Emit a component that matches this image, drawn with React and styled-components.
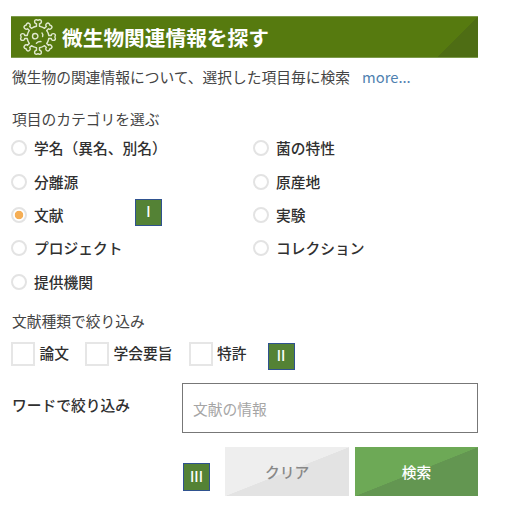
import { useState } from "react"
import styled, { createGlobalStyle } from "styled-components"

const GlobalStyle = createGlobalStyle`
  * {
    box-sizing: border-box;
  }

  body {
    margin: 0;
    background-color: #fff;
    color: #303030;
    font-family: "Noto Sans CJK JP", "Noto Sans", sans-serif;
    font-size: 14.75px;
    line-height: 22px;
  }

  button,
  input {
    font: inherit;
  }
`

const Panel = styled.main`
  width: 509px;
  height: 513px;
  padding: 16px 31px 0 11px;
  overflow: hidden;
`

const Header = styled.header`
  display: flex;
  align-items: center;
  gap: 6px;
  height: 42px;
  padding-left: 8px;
  border: 1px solid #7d9a4b;
  border-width: 1px 0;
  background: linear-gradient(135deg, transparent 50%, #4e6d14 50.5%) right /
    41px 100% no-repeat #567a0f;
`

const Title = styled.h1`
  margin: 0 0 0 -1px;
  color: #fff;
  font-size: 20.7px;
  font-weight: 700;
  line-height: 30px;
`

const Lead = styled.p`
  margin: 8px 0 0 1px;
  color: #444;
  white-space: nowrap;
`

const MoreLink = styled.a`
  margin-left: 12px;
  color: #4f81b0;
  text-decoration: none;
`

const Heading = styled.h2`
  margin: ${(props) => props.$top}px 0 0 1px;
  color: #444;
  font-size: inherit;
  font-weight: 400;
`

const RadioGrid = styled.div`
  display: grid;
  grid-template-columns: 242px 1fr;
  grid-auto-rows: 33.4px;
  align-items: center;
  margin-top: 2.5px;
`

const Cell = styled.div`
  position: relative;
`

const RadioLabel = styled.label`
  display: inline-flex;
  align-items: center;
  gap: 7px;
  font-weight: 500;
  white-space: nowrap;
`

const Radio = styled.input`
  appearance: none;
  flex: none;
  width: 16px;
  height: 16px;
  margin: 0;
  border: 2px solid #e3e3e3;
  border-radius: 50%;
  background-color: #fff;

  &:checked {
    background-image: radial-gradient(circle, #f5ae55 3.9px, transparent 4.6px);
  }
`

const CheckRow = styled.div`
  display: flex;
  align-items: center;
  height: 24px;
  margin-top: 9.5px;
`

const CheckLabel = styled.label`
  display: flex;
  align-items: center;
  gap: 4.5px;
  margin-right: 16px;
  font-weight: 500;
`

const CheckText = styled.span`
  margin-top: -2px;
`

const Checkbox = styled.input`
  appearance: none;
  flex: none;
  width: 24px;
  height: 24px;
  margin: 0;
  border: 2px solid #e6e6e6;
  background-color: #fff;

  &:checked {
    background-color: #f5ae55;
  }
`

const Badge = styled.span`
  display: flex;
  align-items: center;
  justify-content: center;
  flex: none;
  width: 27px;
  height: 27px;
  padding-bottom: 3px;
  border: 1px solid #2f528f;
  background-color: #548235;
  color: #fff;
  font-size: 14px;
  font-weight: 500;
  line-height: 1;
`

const FloatingBadge = styled(Badge)`
  position: absolute;
  top: -5px;
  left: 124px;
`

const CheckBadge = styled(Badge)`
  margin: 6px 0 0 5px;
`

const WordRow = styled.div`
  display: grid;
  grid-template-columns: 171px 1fr;
  margin-top: 17px;
`

const WordLabel = styled.label`
  padding: 11px 0 0 1px;
  font-weight: 500;
`

const WordInput = styled.input`
  width: 296px;
  height: 50px;
  padding: 2px 10px 0;
  border: 1px solid #777;
  border-radius: 0;
  outline: none;
  color: #222;

  &::placeholder {
    color: #a5a5a5;
    opacity: 1;
  }
`

const Actions = styled.div`
  display: flex;
  justify-content: flex-end;
  align-items: flex-start;
  margin-top: 14px;
`

const ActionBadge = styled(Badge)`
  height: 28px;
  margin: 16px 15px 0 0;
  padding-bottom: 1px;
`

const Button = styled.button`
  width: ${(props) => (props.$primary ? 123 : 124)}px;
  height: 49px;
  margin-left: ${(props) => (props.$primary ? 6 : 0)}px;
  padding: 1px 0 0;
  border: none;
  background: ${(props) =>
    props.$primary
      ? "linear-gradient(to bottom right, #6da956 50%, #639651 50.5%)"
      : "linear-gradient(to bottom right, #eeeeee 50%, #e3e3e3 50.5%)"};
  color: ${(props) => (props.$primary ? "#fff" : "#888")};
  font-weight: 500;
`

const categories = [
  "学名（異名、別名）",
  "菌の特性",
  "分離源",
  "原産地",
  "文献",
  "実験",
  "プロジェクト",
  "コレクション",
  "提供機関",
]

const documentTypes = ["論文", "学会要旨", "特許"]

const spikes = [0, 45, 90, 135, 180, 225, 270, 315]

function VirusIcon() {
  return (
    <svg
      width="38"
      height="38"
      viewBox="-19 -19 38 38"
      fill="none"
      stroke="#dfe8cd"
      strokeWidth="1.4"
      strokeLinecap="round"
      strokeLinejoin="round"
    >
      {spikes.map((angle) => (
        <path
          key={angle}
          transform={`rotate(${angle})`}
          d="M-6.3 -8.8Q-4.2 -10.3 -1.5 -10.8L-1.5 -13.3C-4.1 -13.3 -4 -17.4 -1.5 -17.4Q0 -16.2 1.5 -17.4C4 -17.4 4.1 -13.3 1.5 -13.3L1.5 -10.8"
        />
      ))}
      <circle cx="-2.8" cy="-.8" r="2.7" />
      <path d="M4 -4Q5.4 -2.6 4.6 -.5M-1.6 6.2Q.4 4.3 3 4.6" />
    </svg>
  )
}

export default function App() {
  const [category, setCategory] = useState("文献")
  const [word, setWord] = useState("")

  function handleClear() {
    setCategory("文献")
    setWord("")
  }

  return (
    <>
      <GlobalStyle />
      <Panel>
        <Header>
          <VirusIcon />
          <Title>微生物関連情報を探す</Title>
        </Header>
        <Lead>
          微生物の関連情報について、選択した項目毎に検索
          <MoreLink href="#">more...</MoreLink>
        </Lead>

        <Heading $top={20}>項目のカテゴリを選ぶ</Heading>
        <RadioGrid>
          {categories.map((name) => (
            <Cell key={name}>
              <RadioLabel>
                <Radio
                  type="radio"
                  name="category"
                  checked={category === name}
                  onChange={() => setCategory(name)}
                />
                {name}
              </RadioLabel>
              {name === "文献" && <FloatingBadge>I</FloatingBadge>}
            </Cell>
          ))}
        </RadioGrid>

        <Heading $top={11}>文献種類で絞り込み</Heading>
        <CheckRow>
          {documentTypes.map((name) => (
            <CheckLabel key={name}>
              <Checkbox type="checkbox" name="type" />
              <CheckText>{name}</CheckText>
            </CheckLabel>
          ))}
          <CheckBadge>II</CheckBadge>
        </CheckRow>

        <WordRow>
          <WordLabel htmlFor="word">ワードで絞り込み</WordLabel>
          <WordInput
            id="word"
            placeholder="文献の情報"
            value={word}
            onChange={(e) => setWord(e.target.value)}
          />
        </WordRow>

        <Actions>
          <ActionBadge>III</ActionBadge>
          <Button type="button" onClick={handleClear}>
            クリア
          </Button>
          <Button type="button" $primary>
            検索
          </Button>
        </Actions>
      </Panel>
    </>
  )
}
